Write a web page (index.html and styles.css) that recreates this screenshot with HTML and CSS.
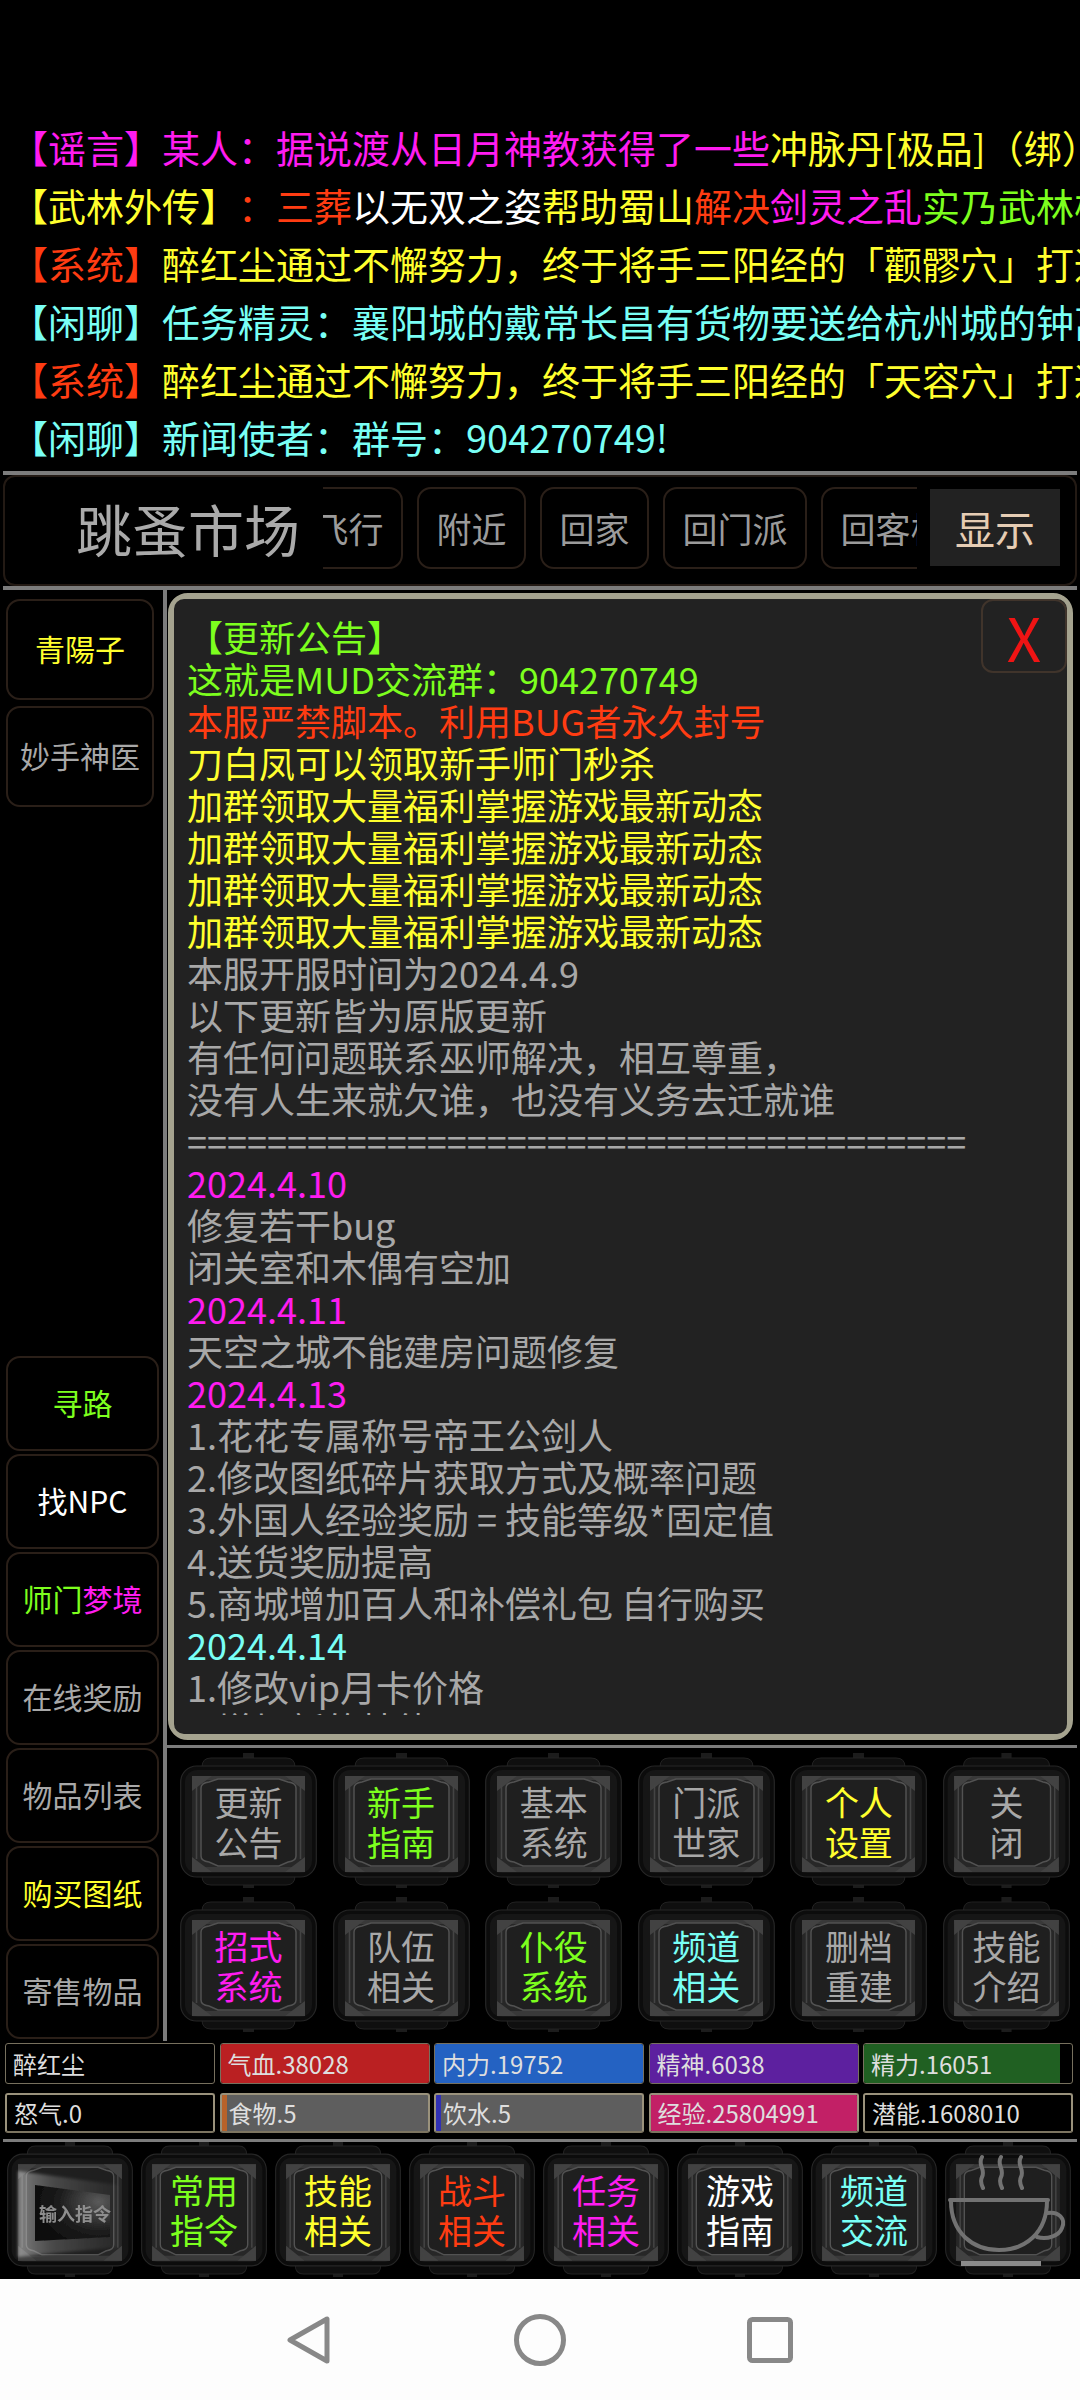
FILE: index.html
```html
<!DOCTYPE html>
<html lang="zh-CN">
<head>
<meta charset="utf-8">
<title>跳蚤市场</title>
<link rel="stylesheet" href="styles.css">
</head>
<body>
<svg class="defs" width="0" height="0" aria-hidden="true">
  <defs>
    <linearGradient id="sheen" x1="0" y1="0" x2="1" y2="0">
      <stop offset="0" stop-color="#cfcfcf" stop-opacity=".55"/><stop offset=".35" stop-color="#999" stop-opacity=".34"/><stop offset="1" stop-color="#777" stop-opacity=".1"/>
    </linearGradient>
    <radialGradient id="glass" cx=".85" cy=".3" r=".9">
      <stop offset="0" stop-color="#5a5a5a"/><stop offset=".6" stop-color="#1c1c1c"/><stop offset="1" stop-color="#0c0c0c"/>
    </radialGradient>
    <filter id="soft"><feGaussianBlur stdDeviation=".7"/></filter>
    <filter id="softer" x="-10%" y="-10%" width="120%" height="120%"><feGaussianBlur stdDeviation="1.4"/></filter>
    <symbol id="frame" viewBox="0 0 137 137" preserveAspectRatio="none">
      <path d="M63 0h11v5h-11z" fill="#1c1c1c"/>
      <path d="M63 132h11v3h-11z" fill="#1c1c1c"/>
      <path d="M22 14q0-9 9-9h75q9 0 9 9zM22 123q0 9 9 9h75q9 0 9-9z" fill="#0f0f0f" stroke="#222"/>
      <rect x=".7" y="13" width="135.6" height="111" rx="16" fill="#0c0c0c" stroke="#262626" stroke-width="1.2"/>
      <rect x="5" y="17" width="127" height="103" rx="12" fill="#161616"/>
      <rect x="12" y="23" width="113" height="96" rx="2" fill="#272727"/>
      <path d="M12 23H125V27H12zM12 114H125V119H12z" fill="#393939"/>
      <path d="M12 23H32L12 38zM125 23H105L125 38zM12 119H32L12 104zM125 119H105L125 104z" fill="#424242"/>
      <path d="M16.5 32V106M120.5 32V106" stroke="#444" stroke-width="1.6" fill="none"/>
      <path d="M21 35Q21 30 29 29L38 26H99L108 29Q116 30 116 35V103Q116 108 108 109L99 113H38L29 109Q21 108 21 103Z" fill="#1f1f1f" stroke="#525252" stroke-width="1.5"/>
    </symbol>
  </defs>
</svg>

<section class="chat">
  <p class="line"><span class="mag">【谣言】某人：据说渡从日月神教获得了一些</span><span class="yel">冲脉丹[极品]（绑）</span></p>
  <p class="line"><span class="yel">【武林外传】</span><span class="red">：三葬</span><span class="wht">以无双之姿</span><span class="yel">帮助蜀山</span><span class="red">解决</span><span class="mag">剑灵之乱</span><span class="grn">实乃武林楷模</span></p>
  <p class="line"><span class="red">【系统】</span><span class="yel">醉红尘通过不懈努力，终于将手三阳经的「颧髎穴」打通了</span></p>
  <p class="line cyn">【闲聊】任务精灵：襄阳城的戴常长昌有货物要送给杭州城的钟离</p>
  <p class="line"><span class="red">【系统】</span><span class="yel">醉红尘通过不懈努力，终于将手三阳经的「天容穴」打通了</span></p>
  <p class="line cyn">【闲聊】新闻使者：群号：904270749!</p>
</section>

<div class="rule rule-chat"></div>

<header class="topbar">
  <h1 class="title">跳蚤市场</h1>
  <div class="scroller">
    <div class="track">
      <span class="chip">飞行</span>
      <span class="chip">附近</span>
      <span class="chip">回家</span>
      <span class="chip">回门派</span>
      <span class="chip">回客栈</span>
    </div>
  </div>
  <span class="show">显示</span>
</header>

<div class="rule rule-top"></div>

<main class="main">
  <aside class="side">
    <div class="side-group side-top">
      <div class="npc yel">青陽子</div>
      <div class="npc gry">妙手神医</div>
    </div>
    <div class="side-group side-bottom">
      <div class="act grn">寻路</div>
      <div class="act wht">找NPC</div>
      <div class="act split"><span class="grn">师门</span><span class="mag">梦境</span></div>
      <div class="act gry">在线奖励</div>
      <div class="act gry">物品列表</div>
      <div class="act yel">购买图纸</div>
      <div class="act gry">寄售物品</div>
    </div>
  </aside>
  <div class="vrule"></div>
  <div class="content">
    <article class="modal">
      <div class="modal-inner">
        <span class="close">X</span>
        <div class="notice">
          <p class="grn">【更新公告】</p>
          <p class="grn">这就是MUD交流群：904270749</p>
          <p class="red">本服严禁脚本。利用BUG者永久封号</p>
          <p class="yel">刀白凤可以领取新手师门秒杀</p>
          <p class="yel">加群领取大量福利掌握游戏最新动态</p>
          <p class="yel">加群领取大量福利掌握游戏最新动态</p>
          <p class="yel">加群领取大量福利掌握游戏最新动态</p>
          <p class="yel">加群领取大量福利掌握游戏最新动态</p>
          <p>本服开服时间为2024.4.9</p>
          <p>以下更新皆为原版更新</p>
          <p>有任何问题联系巫师解决，相互尊重，</p>
          <p>没有人生来就欠谁，也没有义务去迁就谁</p>
          <p>=======================================</p>
          <p class="mag">2024.4.10</p>
          <p>修复若干bug</p>
          <p>闭关室和木偶有空加</p>
          <p class="mag">2024.4.11</p>
          <p>天空之城不能建房问题修复</p>
          <p class="mag">2024.4.13</p>
          <p>1.花花专属称号帝王公剑人</p>
          <p>2.修改图纸碎片获取方式及概率问题</p>
          <p>3.外国人经验奖励 = 技能等级*固定值</p>
          <p>4.送货奖励提高</p>
          <p>5.商城增加百人和补偿礼包 自行购买</p>
          <p class="cyn">2024.4.14</p>
          <p>1.修改vip月卡价格</p>
          <p>2.增加新的技能</p>
        </div>
      </div>
    </article>
    <div class="rule rule-mid"></div>
    <nav class="menu">
      <button class="btn gry"><svg class="frame"><use href="#frame"/></svg><span class="txt">更新<br>公告</span></button>
      <button class="btn grn"><svg class="frame"><use href="#frame"/></svg><span class="txt">新手<br>指南</span></button>
      <button class="btn gry"><svg class="frame"><use href="#frame"/></svg><span class="txt">基本<br>系统</span></button>
      <button class="btn gry"><svg class="frame"><use href="#frame"/></svg><span class="txt">门派<br>世家</span></button>
      <button class="btn yel"><svg class="frame"><use href="#frame"/></svg><span class="txt">个人<br>设置</span></button>
      <button class="btn gry"><svg class="frame"><use href="#frame"/></svg><span class="txt">关<br>闭</span></button>
      <button class="btn mag"><svg class="frame"><use href="#frame"/></svg><span class="txt">招式<br>系统</span></button>
      <button class="btn gry"><svg class="frame"><use href="#frame"/></svg><span class="txt">队伍<br>相关</span></button>
      <button class="btn grn"><svg class="frame"><use href="#frame"/></svg><span class="txt">仆役<br>系统</span></button>
      <button class="btn cyn"><svg class="frame"><use href="#frame"/></svg><span class="txt">频道<br>相关</span></button>
      <button class="btn gry"><svg class="frame"><use href="#frame"/></svg><span class="txt">删档<br>重建</span></button>
      <button class="btn gry"><svg class="frame"><use href="#frame"/></svg><span class="txt">技能<br>介绍</span></button>
    </nav>
  </div>
</main>

<section class="stats">
  <div class="bar"><span class="label">醉红尘</span></div>
  <div class="bar"><i class="fill f-hp" style="width:100%"></i><span class="label">气血.38028</span></div>
  <div class="bar"><i class="fill f-mp" style="width:100%"></i><span class="label">内力.19752</span></div>
  <div class="bar"><i class="fill f-sp" style="width:100%"></i><span class="label">精神.6038</span></div>
  <div class="bar"><i class="fill f-en" style="width:94%"></i><span class="label">精力.16051</span></div>
  <div class="bar strong"><span class="label">怒气.0</span></div>
  <div class="bar strong track-gray"><i class="fill f-food" style="width:2.5%"></i><span class="label">食物.5</span></div>
  <div class="bar strong track-gray"><i class="fill f-water" style="width:2.5%"></i><span class="label">饮水.5</span></div>
  <div class="bar strong"><i class="fill f-xp" style="width:100%"></i><span class="label">经验.25804991</span></div>
  <div class="bar strong"><span class="label">潜能.1608010</span></div>
</section>

<div class="rule rule-bottom"></div>

<nav class="dock">
  <button class="btn gry"><svg class="frame"><use href="#frame"/></svg>
    <svg class="overlay" viewBox="0 0 126 138">
      <path d="M11 30 L111 44 V106 L11 116Z" fill="url(#sheen)" filter="url(#softer)"/>
      <path d="M28 44 L103 54 V96 L28 100Z" fill="url(#glass)" filter="url(#soft)"/>
      <text class="cmd" x="32" y="80" filter="url(#soft)">输入指令</text>
    </svg>
  </button>
  <button class="btn grn"><svg class="frame"><use href="#frame"/></svg><span class="txt">常用<br>指令</span></button>
  <button class="btn yel"><svg class="frame"><use href="#frame"/></svg><span class="txt">技能<br>相关</span></button>
  <button class="btn red"><svg class="frame"><use href="#frame"/></svg><span class="txt">战斗<br>相关</span></button>
  <button class="btn mag"><svg class="frame"><use href="#frame"/></svg><span class="txt">任务<br>相关</span></button>
  <button class="btn wht"><svg class="frame"><use href="#frame"/></svg><span class="txt">游戏<br>指南</span></button>
  <button class="btn cyn"><svg class="frame"><use href="#frame"/></svg><span class="txt">频道<br>交流</span></button>
  <button class="btn gry"><svg class="frame"><use href="#frame"/></svg>
    <svg class="overlay" viewBox="0 0 126 138">
      <g fill="none" stroke="#727272" stroke-width="4" stroke-linecap="round" filter="url(#soft)">
        <path d="M37 16c-5 8 4 12 0 20c-2 4-1 7 1 11M56 16c-5 8 4 12 0 20c-2 4-1 7 1 11M76 16c-5 8 4 12 0 20c-2 4-1 7 1 11"/>
        <path d="M5 59H103"/>
        <path d="M6 60C6 92 28 109 54 109C80 109 102 92 102 60"/>
        <path d="M102 72C114 70 121 78 117 87C114 95 102 99 92 96"/>
      </g>
      <rect x="16" y="120" width="80" height="5" fill="#8a8a8a"/>
    </svg>
  </button>
</nav>

<footer class="navbar">
  <svg class="nav-back" width="44" height="50" viewBox="0 0 44 50"><path d="M40 4V46L3 25Z"/></svg>
  <svg class="nav-home" width="52" height="52" viewBox="0 0 52 52"><circle cx="26" cy="26" r="23.5"/></svg>
  <svg class="nav-recent" width="46" height="46" viewBox="0 0 46 46"><rect x="2.5" y="2.5" width="41" height="41" rx="3"/></svg>
</footer>
</body>
</html>
```
FILE: styles.css
```css
* { box-sizing: border-box; }
html, body { margin: 0; padding: 0; }
body {
  width: 1080px;
  height: 2400px;
  overflow: hidden;
  background: #000;
  color: #a8a8a8;
  font-family: "Noto Sans CJK SC", "Noto Sans", sans-serif;
  text-spacing-trim: space-all;
}
p, h1 { margin: 0; font-weight: 400; }
.defs { display: block; height: 0; }

.mag { color: #ff1cf0; }
.yel { color: #ffff2e; }
.red { color: #ff3c12; }
.wht { color: #ffffff; }
.grn { color: #7dff1e; }
.cyn { color: #79fff5; }
.gry { color: #a8a8a8; }

.chat { padding: 118px 0 0 10px; height: 471px; overflow: hidden; }
.line { font-size: 38px; line-height: 58px; height: 58px; white-space: nowrap; overflow: hidden; width: 1070px; }

.rule { background: #7c7c7c; }
.rule-chat { height: 4px; margin: 0 3px; }
.rule-top { height: 4px; margin: 0 3px; }
.rule-mid { height: 3px; margin: 5px 3px 0 -4px; }
.rule-bottom { height: 3px; margin: 6px 3px 0; position: relative; z-index: 2; }

.topbar {
  height: 111px;
  margin: 0 3px;
  padding-bottom: 6px;
  display: flex;
  align-items: center;
  border: 2px solid #231a14;
  border-radius: 12px;
}
.title { font-size: 56px; line-height: 1; color: #aaaaaa; margin-left: 71px; width: 224px; white-space: nowrap; }
.scroller { width: 594px; height: 82px; margin-left: 23px; overflow: hidden; }
.track { display: flex; gap: 14px; margin-left: -29px; width: 900px; height: 100%; }
.chip {
  flex: none;
  padding: 0 17.5px;
  display: flex;
  align-items: center;
  font-size: 35px;
  color: #9b9b9b;
  border: 2px solid #2a1f18;
  border-radius: 14px;
}
.show {
  width: 130px;
  height: 77px;
  margin-left: 13px;
  background: #222;
  color: #e6cdb4;
  font-size: 40px;
  display: flex;
  align-items: center;
  justify-content: center;
}

.main { height: 1451px; display: flex; }
.side {
  width: 163px;
  padding: 9px 0 2px 6px;
  display: flex;
  flex-direction: column;
  justify-content: space-between;
}
.side-group { display: flex; flex-direction: column; }
.side-top { gap: 6px; width: 148px; }
.side-bottom { gap: 3px; width: 153px; }
.npc, .act {
  display: flex;
  align-items: center;
  justify-content: center;
  padding-bottom: 4px;
  font-size: 30px;
  border: 2px solid #2a1f18;
  border-radius: 14px;
  white-space: nowrap;
}
.npc { height: 101px; }
.act { height: 95px; }
.vrule { width: 4px; background: #7c7c7c; }

.content { width: 913px; display: flex; flex-direction: column; }
.modal {
  height: 1147px;
  margin: 3px 0 0 1px;
  width: 905px;
  background: #111;
  border: 2px solid #a5a38f;
  border-radius: 20px;
}
.modal-inner {
  position: relative;
  height: 100%;
  padding: 16px 0 0 13px;
  background: #222;
  border: 4px solid #a5a38f;
  border-radius: 14px;
  overflow: hidden;
}
.close {
  position: absolute;
  top: 0;
  right: 0;
  width: 86px;
  height: 74px;
  display: flex;
  align-items: center;
  justify-content: center;
  color: #f01414;
  font-size: 60px;
  line-height: 1;
  border: 2px solid #40342b;
  border-radius: 12px;
}
.notice { font-size: 36px; line-height: 42px; white-space: nowrap; height: 1100px; overflow: hidden; }

.menu {
  display: grid;
  grid-template-columns: repeat(5, 137px) 127px;
  grid-auto-rows: 137px;
  column-gap: 15.6px;
  row-gap: 7px;
  padding: 5px 0 0 13px;
}
.btn {
  position: relative;
  display: flex;
  align-items: center;
  justify-content: center;
  padding: 0;
  background: none;
  border: 0;
  font-family: inherit;
}
.frame, .overlay { position: absolute; inset: 0; width: 100%; height: 100%; }
.txt { position: relative; font-size: 34px; line-height: 40px; text-align: center; }

.stats {
  display: grid;
  grid-template-columns: repeat(5, 210px);
  grid-template-rows: 41px 40px;
  column-gap: 4.5px;
  row-gap: 9px;
  padding: 2px 0 0 5px;
}
.bar {
  position: relative;
  display: flex;
  align-items: center;
  padding-left: 7px;
  background: #000;
  border: 1px solid #77705e;
  border-radius: 3px;
  overflow: hidden;
}
.bar.strong { border: 2px solid #9a927c; border-bottom-color: #7c7460; }
.bar.track-gray { background: #5e5e5e; }
.fill { position: absolute; left: 0; top: 0; bottom: 0; display: block; }
.f-hp { background: #ba2022; }
.f-mp { background: #2462c2; }
.f-sp { background: #5d209f; }
.f-en { background: #206022; }
.f-xp { background: #c22066; }
.f-food { background: #b8622a; }
.f-water { background: #3030b4; }
.label { position: relative; font-size: 24px; line-height: 1; color: #dedede; white-space: nowrap; }

.dock {
  display: grid;
  grid-template-columns: repeat(8, 126px);
  grid-auto-rows: 138px;
  column-gap: 8px;
  padding-left: 7px;
  margin-top: -1px;
  height: 138px;
}
.cmd { font-size: 18px; font-weight: 700; fill: #8e8e8e; font-family: "Noto Sans CJK SC", sans-serif; }

.navbar {
  height: 121px;
  background: #fdfdfd;
  display: grid;
  grid-template-columns: repeat(3, 230.5px);
  justify-items: center;
  align-items: center;
  padding-left: 194px;
}
.navbar svg { fill: none; stroke: #888; stroke-width: 5; stroke-linejoin: round; }
```
